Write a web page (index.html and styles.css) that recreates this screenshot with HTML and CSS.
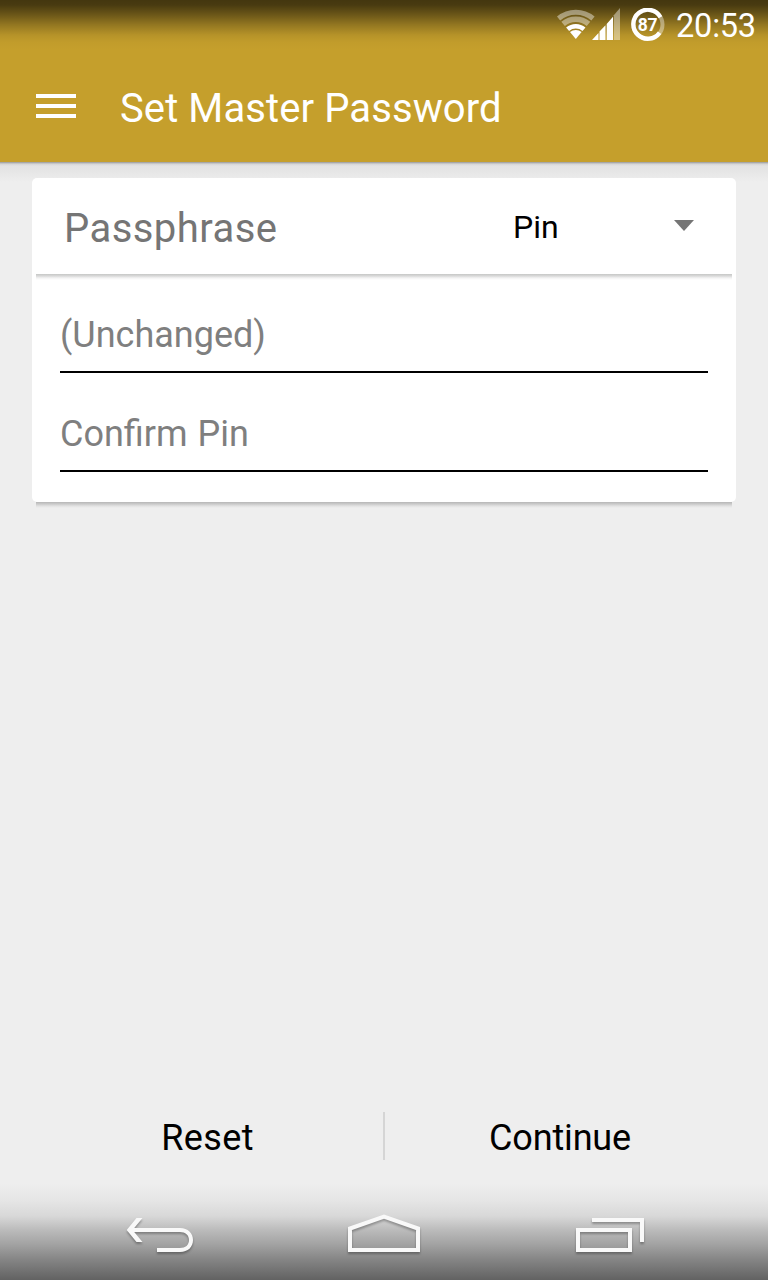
FILE: index.html
```html
<!DOCTYPE html>
<html lang="en">
<head>
<meta charset="utf-8">
<title>Set Master Password</title>
<link rel="stylesheet" href="styles.css">
</head>
<body>
<div class="screen">
  <header class="app-bar">
    <div class="status-bar">
      <svg class="status-wifi" width="40" height="32" viewBox="0 0 40 32">
        <path class="wifi-arc wifi-off" stroke-width="5" d="M2.600 10.500A26.800 26.800 0 0 1 37.000 10.500"/>
        <path class="wifi-arc wifi-off" stroke-width="5.500" d="M7.100 15.800A19.800 19.800 0 0 1 32.500 15.800"/>
        <path class="wifi-arc" stroke-width="4.600" d="M11.600 21.200A12.800 12.800 0 0 1 28 21.200"/>
        <path d="M19.800 31L14 24.100A9 9 0 0 1 25.600 24.100Z" fill="#fff"/>
      </svg>
      <svg class="status-signal" width="28" height="32" viewBox="0 0 28 32">
        <path d="M0 32L6.500 25V32ZM7.500 32V23.500L13.500 17.200V32ZM14.700 32V16L21 8.800V32Z" fill="#fff"/>
        <path d="M21.800 32V7.200L28 0V32Z" fill="#fff" fill-opacity=".42"/>
      </svg>
      <div class="battery">
        <svg width="34" height="34" viewBox="0 0 34 34">
          <circle cx="17" cy="16.500" r="14.500" class="battery-track"/>
          <path d="M28.600 24.700A14.500 14.500 0 1 1 29.500 9.200" class="battery-level"/>
        </svg>
        <span class="battery-value">87</span>
      </div>
      <span class="clock">20:53</span>
    </div>
    <div class="toolbar">
      <div class="menu-icon"><i></i><i></i><i></i></div>
      <h1 class="title">Set Master Password</h1>
    </div>
  </header>
  <main class="content">
    <section class="card">
      <div class="card-header">
        <span class="card-label">Passphrase</span>
        <div class="spinner">
          <span class="spinner-value">Pin</span>
          <svg class="spinner-arrow" width="20" height="11" viewBox="0 0 20 11"><path d="M0 0H20L10 11Z" fill="#757575"/></svg>
        </div>
      </div>
      <div class="divider"></div>
      <div class="fields">
        <div class="field"><span>(Unchanged)</span></div>
        <div class="field"><span class="hint-confirm">Confirm Pin</span></div>
      </div>
    </section>
    <div class="card-shadow"></div>
  </main>
  <footer class="actions">
    <div class="action action-reset">Reset</div>
    <div class="action-divider"></div>
    <div class="action action-continue">Continue</div>
  </footer>
  <nav class="nav-bar">
    <svg class="nav-icon" width="68" height="40" viewBox="0 0 68 40">
      <path d="M-.3 14L9.500 2H15.500L7.200 12H53C61 12 66 17 66 24S61 36 53 36H30V32H53C58.500 32 62 29 62 24S58.500 16 53 16H7.200L15.500 26H9.500Z" fill="#f9f9f9"/>
    </svg>
    <svg class="nav-icon nav-home" width="72" height="40" viewBox="0 0 72 40">
      <path d="M2 34V12.500L36 .600L70 12.500V34Z" fill="none" stroke="#f9f9f9" stroke-width="4"/>
    </svg>
    <svg class="nav-icon" width="68" height="40" viewBox="0 0 68 40">
      <path d="M2 14H54V34H2ZM16 4H66V26" fill="none" stroke="#f9f9f9" stroke-width="4"/>
    </svg>
  </nav>
</div>
</body>
</html>
```
FILE: styles.css
```css
body { margin: 0; }
.screen {
  width: 768px; height: 1280px; overflow: hidden;
  display: flex; flex-direction: column;
  background: #eee; color: #000;
  font-family: Roboto, sans-serif;
}
svg { display: block; flex: none; }
.app-bar { height: 162px; flex: none; background: #c59f2c; color: #fff; }
.status-bar {
  height: 50px; box-sizing: border-box; padding: 8px 12px 0 0;
  display: flex; justify-content: flex-end; align-items: flex-start;
  background: linear-gradient(rgba(0,0,0,.66) 0, rgba(0,0,0,.63) 5px, rgba(0,0,0,.47) 14px, rgba(0,0,0,.25) 25px, rgba(0,0,0,.08) 35px, rgba(0,0,0,.02) 42px, transparent 50px);
}
.status-wifi { margin-right: -4px; }
.wifi-arc { fill: none; stroke: #fff; }
.wifi-off { stroke-opacity: .42; }
.status-signal { margin-right: 10.500px; }
.battery { display: grid; place-items: center; width: 34px; height: 34px; margin-right: 11.500px; }
.battery > * { grid-area: 1 / 1; }
.battery-track { fill: none; stroke: #fff; stroke-opacity: .4; stroke-width: 4px; }
.battery-level { fill: none; stroke: #fff; stroke-width: 4.300px; }
.battery-value { font-size: 17.500px; line-height: 20px; font-weight: 700; margin-top: -1px; letter-spacing: -.3px; }
.clock { font-size: 32.500px; line-height: 37px; letter-spacing: -.2px; width: 80px; white-space: nowrap; }
.toolbar { height: 112px; display: flex; align-items: center; padding-left: 36px; }
.menu-icon { display: grid; gap: 6px; width: 40px; margin-right: 44px; }
.menu-icon i { height: 4px; background: #fff; }
.title { margin: 5px 0 0; font-size: 40px; line-height: 48px; font-weight: 400; letter-spacing: .1px; }
.content {
  flex: 1; padding: 16px 32px 0;
  background: linear-gradient(#999 0, #b5b5b5 1px, #d5d5d5 2px, #e3e3e3 4px, #e5e5e5 8px, #eee 20px);
}
.card { background: #fff; border-radius: 5px; height: 324px; }
.card-header { height: 96px; display: flex; align-items: center; padding: 0 42px 0 32px; }
.card-label { font-size: 40px; line-height: 48px; letter-spacing: .45px; color: #757575; margin-top: 6px; width: 449px; }
.spinner { flex: 1; display: flex; align-items: center; justify-content: space-between; }
.spinner-value { font-size: 32px; line-height: 40px; margin-top: 2px; }
.spinner-arrow { margin-bottom: 2px; }
.divider, .card-shadow { height: 6px; margin: 0 4px; }
.divider { background: linear-gradient(#c6c7c6, #d9d9d9 2px, #f3f3f3 4px, #fff); }
.card-shadow { background: linear-gradient(#b6b6b6, #cacaca 2px, #e1e1e1 4px, #eee); }
.fields { padding: 0 28px; }
.field {
  height: 99px; box-sizing: border-box; border-bottom: 2px solid #000;
  display: flex; align-items: flex-end; padding-bottom: 14px;
  color: #7f7f7f; font-size: 36px; line-height: 44px;
}
.field:first-child { height: 93px; }
.hint-confirm { word-spacing: 1px; }
.actions { display: grid; grid-template-columns: 383px 2px 383px; align-items: center; height: 96px; flex: none; }
.action { text-align: center; font-size: 36px; line-height: 44px; }
.action-reset { padding: 4px 0 0 32px; letter-spacing: .4px; }
.action-continue { padding: 4px 33px 0 0; letter-spacing: -.15px; }
.action-divider { height: 48px; background: #d5d5d5; }
.nav-bar {
  height: 96px; flex: none; box-sizing: border-box; padding: 32px 124px 0 127px;
  display: flex; justify-content: space-between; align-items: flex-start;
  background: linear-gradient(#eee 0, #e5e5e5 17px, #d8d8d8 32px, #bbb 46px, #a3a3a3 60px, #868686 75px, #626262 96px);
}
.nav-icon { overflow: visible; filter: drop-shadow(0 2px 1px rgba(0,0,0,.3)); }
.nav-home { margin: 0 2px 0 -2px; }
```
